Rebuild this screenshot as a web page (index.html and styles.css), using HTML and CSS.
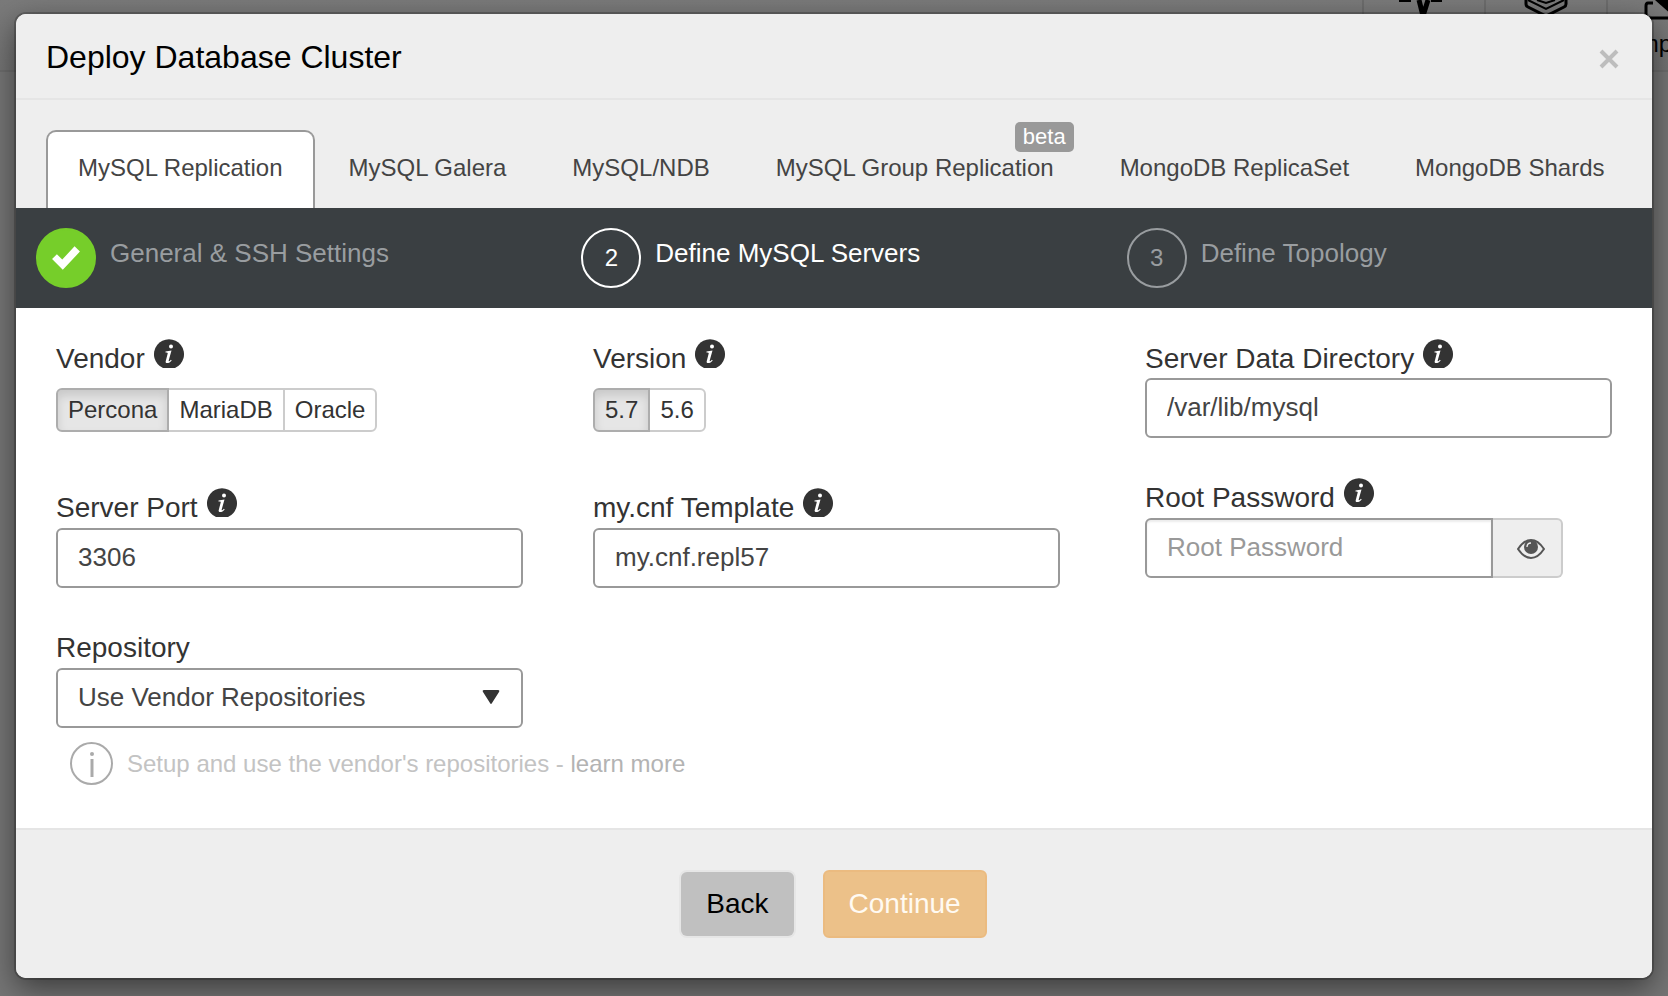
FILE: index.html
```html
<!DOCTYPE html>
<html lang="en">
<head>
<meta charset="utf-8">
<title>Deploy Database Cluster</title>
<link rel="stylesheet" href="styles.css">
</head>
<body>
<svg class="sprite" aria-hidden="true">
  <symbol id="info" viewBox="0 0 30 30">
    <path d="M9 29A15 15 0 1 1 21 29Z" fill="#333"/>
    <circle cx="17" cy="7.500" r="2" fill="#fff"/>
    <path d="M11.500 12.600l6-1.200-2.800 10.200c-.2 1 .4 1.200 2.200-.8l.8.700c-2 2.800-6.700 3.700-6 .7l2-7.800c.2-.9-.5-1-2.200-1z" fill="#fff"/>
  </symbol>
</svg>
<div class="backdrop">
  <nav class="topbar" aria-hidden="true">
    <span class="nav-item">
      <svg class="nav-icon" viewBox="0 0 122 70"><path d="M35 0h12M67 0h11" fill="none" stroke="#000" stroke-width="4"/><path d="M55 0l4 16 5-16" fill="none" stroke="#000" stroke-width="5"/></svg>
    </span>
    <span class="nav-item">
      <svg class="nav-icon" viewBox="0 0 122 70"><path d="M40 0v4q0 2 2 3l18 9 18-9q2-1 2-3V0" fill="none" stroke="#000" stroke-width="3"/><path d="M42 0l18 9 18-9M51 0l9 3 9-3" fill="none" stroke="#000" stroke-width="2"/></svg>
    </span>
    <span class="nav-item nav-last">
      <svg class="nav-icon" viewBox="0 0 122 70"><path d="M45 3h-5q-2 0-2 3v12h60" fill="none" stroke="#000" stroke-width="3"/><path d="M47 0h16v14z" fill="#000"/></svg>
      <span class="nav-text">Import</span>
    </span>
  </nav>
</div>
<main class="modal" role="dialog" aria-labelledby="title">
  <header class="modal-header">
    <h1 class="title" id="title">Deploy Database Cluster</h1>
    <button class="close" type="button" aria-label="Close"><svg width="20" height="20" viewBox="0 0 20 20"><path d="M2 2l16 16M18 2L2 18" stroke="#bdbdbd" stroke-width="4"/></svg></button>
  </header>
  <nav class="tabs">
    <a class="tab active" href="#">MySQL Replication</a>
    <a class="tab" href="#">MySQL Galera</a>
    <a class="tab" href="#">MySQL/NDB</a>
    <a class="tab" href="#">MySQL Group Replication<span class="badge">beta</span></a>
    <a class="tab" href="#">MongoDB ReplicaSet</a>
    <a class="tab" href="#">MongoDB Shards</a>
  </nav>
  <ol class="steps">
    <li class="step done"><span class="circle"><svg width="30" height="26" viewBox="0 0 28 24"><path d="M1 13l4.500-4.500 5 5L22 1l5 5-16 17z" fill="#fff"/></svg></span><span class="step-name">General &amp; SSH Settings</span></li>
    <li class="step current"><span class="circle">2</span><span class="step-name">Define MySQL Servers</span></li>
    <li class="step"><span class="circle">3</span><span class="step-name">Define Topology</span></li>
  </ol>
  <form class="form">
    <div class="columns">
      <div class="column">
        <div class="field">
          <span class="label">Vendor <svg class="info"><use href="#info"/></svg></span>
          <div class="toggles"><div class="group">
            <button class="toggle on" type="button">Percona</button><button class="toggle" type="button">MariaDB</button><button class="toggle" type="button">Oracle</button>
          </div></div>
        </div>
        <div class="field">
          <label class="label" for="port">Server Port <svg class="info"><use href="#info"/></svg></label>
          <input class="input" id="port" type="text" value="3306">
        </div>
        <div class="field">
          <label class="label" for="repo">Repository</label>
          <div class="select-wrap">
            <select class="input select" id="repo"><option>Use Vendor Repositories</option></select>
            <svg class="caret" width="18" height="16" viewBox="0 0 18 16"><path d="M2 1h14q2 0 1 2l-7 11q-1 2-2 0L1 3Q0 1 2 1z" fill="#333"/></svg>
          </div>
        </div>
      </div>
      <div class="column">
        <div class="field">
          <span class="label">Version <svg class="info"><use href="#info"/></svg></span>
          <div class="toggles"><div class="group">
            <button class="toggle on" type="button">5.7</button><button class="toggle" type="button">5.6</button>
          </div></div>
        </div>
        <div class="field">
          <label class="label" for="cnf">my.cnf Template <svg class="info"><use href="#info"/></svg></label>
          <input class="input" id="cnf" type="text" value="my.cnf.repl57">
        </div>
      </div>
      <div class="column last">
        <div class="field">
          <label class="label" for="dir">Server Data Directory <svg class="info"><use href="#info"/></svg></label>
          <input class="input" id="dir" type="text" value="/var/lib/mysql">
        </div>
        <div class="field">
          <label class="label" for="pass">Root Password <svg class="info"><use href="#info"/></svg></label>
          <div class="password">
            <input class="input pass" id="pass" type="password" placeholder="Root Password">
            <button class="reveal" type="button" aria-label="Show password"><svg width="28" height="20" viewBox="0 0 28 20"><path d="M1 10Q7 1 14 1t13 9q-6 9-13 9T1 10z" fill="none" stroke="#555" stroke-width="2"/><circle cx="14" cy="8" r="7" fill="#555"/><path d="M10 8q0-4 4-4" fill="none" stroke="#ededed" stroke-width="1.300"/></svg></button>
          </div>
        </div>
      </div>
    </div>
    <p class="hint">
      <svg width="43" height="43" viewBox="0 0 43 43"><circle cx="21.500" cy="21.500" r="20.500" fill="none" stroke="#aaa" stroke-width="2"/><circle cx="22" cy="12" r="2" fill="#aaa"/><path d="M22 17v18" stroke="#aaa" stroke-width="3"/></svg>
      <span>Setup and use the vendor's repositories - <a class="more" href="#">learn more</a></span>
    </p>
  </form>
  <footer class="footer">
    <button class="btn back" type="button">Back</button>
    <button class="btn continue" type="button" disabled>Continue</button>
  </footer>
</main>
</body>
</html>
```
FILE: styles.css
```css
* { box-sizing: border-box; }
body {
  margin: 0;
  min-height: 100vh;
  padding: 14px 16px 18px;
  background: #757575;
  font-family: "Liberation Sans", Arial, sans-serif;
  color: #333;
  overflow: hidden;
}
button, input, select { font-family: inherit; }
.sprite { position: absolute; width: 0; height: 0; }

.backdrop { position: absolute; inset: 0; overflow: hidden; }
.topbar {
  display: flex;
  justify-content: flex-end;
  height: 72px;
  border-bottom: 2px solid #6c6c6c;
  background: linear-gradient(#7a7a7a, #737373);
}
.nav-item { position: relative; width: 122px; border-left: 2px solid #6c6c6c; }
.nav-last { width: 62px; }
.nav-icon { display: block; width: 122px; height: 70px; }
.nav-text { position: absolute; left: 24px; top: 30px; font-size: 24px; line-height: 28px; color: #000; }

.modal {
  position: relative;
  border-radius: 10px;
  background: #fff;
  box-shadow: 0 0 0 2px rgba(0, 0, 0, .2), 0 10px 30px rgba(0, 0, 0, .5);
}
.modal-header {
  display: flex;
  justify-content: space-between;
  align-items: center;
  height: 86px;
  padding: 2px 33px 0 30px;
  border-radius: 10px 10px 0 0;
  border-bottom: 2px solid #e5e5e5;
  background: #eee;
}
.title { margin: 0; font-size: 32px; line-height: 40px; font-weight: 400; color: #000; }
.close { display: flex; padding: 4px 0 0; border: 0; background: none; }

.tabs { display: flex; gap: 2px; padding: 30px 0 0 30px; background: #eee; }
.tab {
  position: relative;
  padding: 22px 30px 26px;
  border: 2px solid transparent;
  border-bottom: 0;
  border-radius: 10px 10px 0 0;
  font-size: 24px;
  line-height: 28px;
  color: #444;
  text-decoration: none;
  white-space: nowrap;
}
.tab.active { border-color: #999; background: #fff; }
.badge {
  position: absolute;
  top: -10px;
  right: 10px;
  padding: 0 8px;
  border-radius: 5px;
  background: #999;
  color: #fff;
  font-size: 22px;
  line-height: 30px;
}

.steps {
  display: grid;
  grid-template-columns: repeat(3, 1fr);
  margin: 0;
  padding: 20px 0;
  background: #3a3f42;
  list-style: none;
}
.step { display: flex; gap: 14px; padding-left: 20px; color: #999da0; }
.circle {
  display: flex;
  align-items: center;
  justify-content: center;
  width: 60px;
  height: 60px;
  border: 2px solid #999da0;
  border-radius: 50%;
  font-size: 24px;
}
.step-name { font-size: 26px; line-height: 50px; }
.current { color: #fff; }
.current .circle { border-color: #fff; }
.done .circle { border-color: #76ce2a; background: #76ce2a; }

.form { padding: 31px 40px 43px; }
.columns { display: grid; grid-template-columns: 467fr 467fr 482fr; column-gap: 70px; }
.column { display: flex; flex-direction: column; gap: 40px; }
.last { padding-left: 15px; }
.label { display: flex; gap: 9px; height: 39px; font-size: 28px; line-height: 40px; }
.field + .field .label { height: 40px; }
.info { width: 30px; height: 30px; }
.toggles { padding: 10px 0 16px; }
.group { display: flex; height: 44px; }
.toggle {
  margin-left: -2px;
  padding: 0 10px;
  border: 2px solid #ccc;
  background: #fff;
  font-size: 24px;
  color: #333;
}
.toggle:first-child { margin-left: 0; border-radius: 6px 0 0 6px; }
.toggle:last-child { border-radius: 0 6px 6px 0; }
.toggle.on {
  position: relative;
  border-color: #adadad;
  background: #e6e6e6;
  box-shadow: inset 0 6px 10px rgba(0, 0, 0, .125);
}
.input {
  display: block;
  width: 100%;
  height: 60px;
  padding: 0 20px 2px;
  border: 2px solid #999;
  border-radius: 6px;
  background: #fff;
  font-size: 26px;
  color: #444;
}
.select-wrap { position: relative; }
.select { appearance: none; }
.caret { position: absolute; right: 23px; top: 21px; pointer-events: none; }
.password { display: flex; margin-right: 49px; }
.pass { flex: 1; min-width: 0; border-radius: 6px 0 0 6px; box-shadow: inset 0 2px 2px rgba(0, 0, 0, .075); }
.pass::placeholder { color: #999; }
.reveal {
  display: flex;
  align-items: center;
  justify-content: center;
  width: 70px;
  padding: 2px 0 0 8px;
  border: 2px solid #ccc;
  border-left: 0;
  border-radius: 0 6px 6px 0;
  background: #eee;
}
.hint {
  display: flex;
  align-items: center;
  gap: 14px;
  margin: 14px 0 0 14px;
  font-size: 24px;
  line-height: 28px;
  color: #c3c3c3;
}
.more { color: #b3b3b3; text-decoration: none; }

.footer {
  display: flex;
  align-items: center;
  justify-content: center;
  gap: 29px;
  height: 150px;
  border-top: 2px solid #e5e5e5;
  border-radius: 0 0 10px 10px;
  background: #eee;
}
.btn { border-radius: 6px; font-size: 28px; line-height: 32px; }
.back { padding: 16px 25px; border: 0; background: #c0c0c0; box-shadow: 0 0 0 2px #e6e6e6; color: #000; }
.continue { padding: 16px 24px; border: 2px solid #ebbb80; background: #ecc189; color: #fffaf2; }
```
